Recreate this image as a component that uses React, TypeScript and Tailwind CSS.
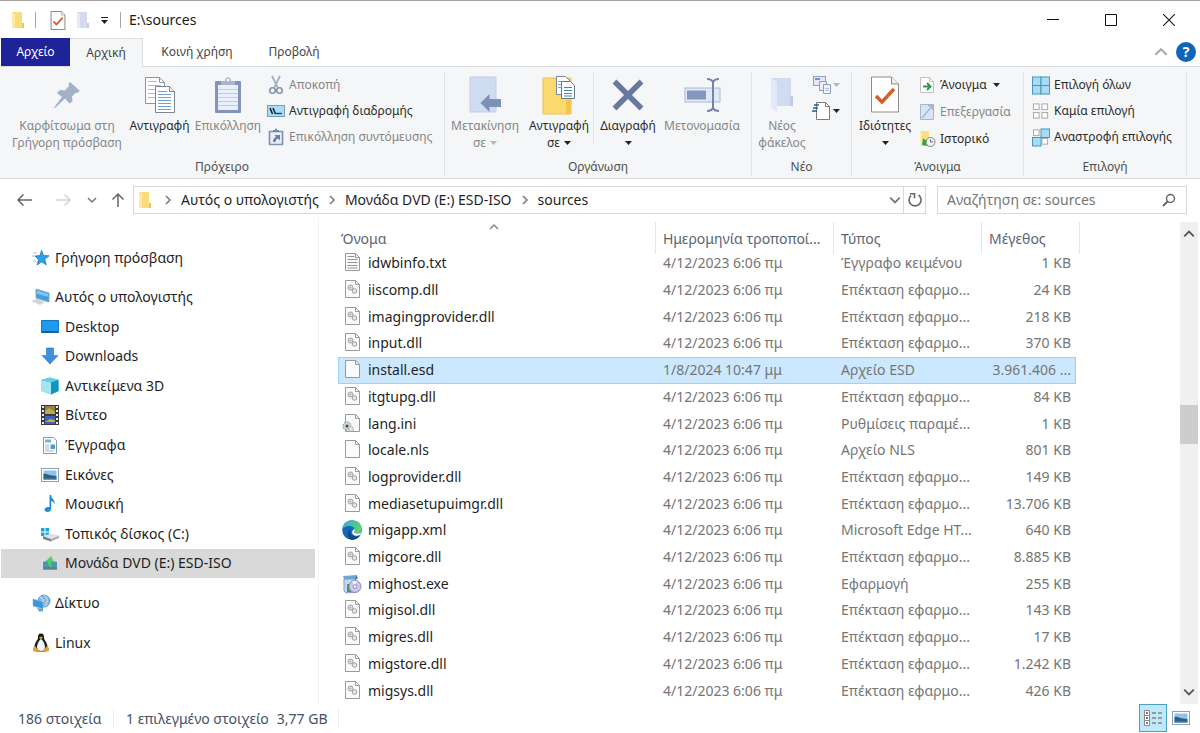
import React from "react";

type FileKind = "txt" | "dll" | "blank" | "ini" | "edge" | "exe";

interface FileRow {
  name: string;
  date: string;
  type: string;
  size: string;
  kind: FileKind;
  selected?: boolean;
}

const DATE = "4/12/2023 6:06 πμ";
const DLL = "Επέκταση εφαρμο...";

const files: FileRow[] = [
  { name: "idwbinfo.txt", date: DATE, type: "Έγγραφο κειμένου", size: "1 KB", kind: "txt" },
  { name: "iiscomp.dll", date: DATE, type: DLL, size: "24 KB", kind: "dll" },
  { name: "imagingprovider.dll", date: DATE, type: DLL, size: "218 KB", kind: "dll" },
  { name: "input.dll", date: DATE, type: DLL, size: "370 KB", kind: "dll" },
  { name: "install.esd", date: "1/8/2024 10:47 μμ", type: "Αρχείο ESD", size: "3.961.406 ...", kind: "blank", selected: true },
  { name: "itgtupg.dll", date: DATE, type: DLL, size: "84 KB", kind: "dll" },
  { name: "lang.ini", date: DATE, type: "Ρυθμίσεις παραμέ...", size: "1 KB", kind: "ini" },
  { name: "locale.nls", date: DATE, type: "Αρχείο NLS", size: "801 KB", kind: "blank" },
  { name: "logprovider.dll", date: DATE, type: DLL, size: "149 KB", kind: "dll" },
  { name: "mediasetupuimgr.dll", date: DATE, type: DLL, size: "13.706 KB", kind: "dll" },
  { name: "migapp.xml", date: DATE, type: "Microsoft Edge HT...", size: "640 KB", kind: "edge" },
  { name: "migcore.dll", date: DATE, type: DLL, size: "8.885 KB", kind: "dll" },
  { name: "mighost.exe", date: DATE, type: "Εφαρμογή", size: "255 KB", kind: "exe" },
  { name: "migisol.dll", date: DATE, type: DLL, size: "143 KB", kind: "dll" },
  { name: "migres.dll", date: DATE, type: DLL, size: "17 KB", kind: "dll" },
  { name: "migstore.dll", date: DATE, type: DLL, size: "1.242 KB", kind: "dll" },
  { name: "migsys.dll", date: DATE, type: DLL, size: "426 KB", kind: "dll" },
];

/* ---------- icons ---------- */

function FolderIcon({ pale = false }: { pale?: boolean }) {
  return (
    <svg width="14" height="18" viewBox="0 0 14 18">
      <path d="M1 1h10v11h2v5H1z" fill={pale ? "#d3dcee" : "#fbdc7c"} />
      <path d="M1 1l3 2v14l-3-1z" fill={pale ? "#e4eaf6" : "#fdeaaa"} />
      <path d="M11 12h2v5h-2z" fill={pale ? "#c2cee6" : "#f0c654"} />
    </svg>
  );
}

function CheckPageIcon({ big = false }: { big?: boolean }) {
  return (
    <svg width={big ? 30 : 16} height={big ? 37 : 19} viewBox="0 0 30 37">
      <path d="M1.500 1h20l7 7v28h-27z" fill="#fff" stroke="#8c8c8c" strokeWidth={big ? 1 : 2} />
      <path d="M21.500 1v7h7" fill="#eee" stroke="#8c8c8c" strokeWidth="1" />
      <path d="M6 20l6 6 12-13" fill="none" stroke="#d3602c" strokeWidth="3.500" />
    </svg>
  );
}

function Caret({ color = "#222" }: { color?: string }) {
  return (
    <svg width="7" height="4" viewBox="0 0 7 4" className="inline-block">
      <path d="M0 0h7L3.500 4z" fill={color} />
    </svg>
  );
}

function Chevron({ dir, color = "#555", size = 10 }: { dir: "up" | "down" | "right"; color?: string; size?: number }) {
  const paths = { up: "M1 7l4-4 4 4", down: "M1 3l4 4 4-4", right: "M3 1l4 4-4 4" };
  return (
    <svg width={size} height={size} viewBox="0 0 10 10">
      <path d={paths[dir]} fill="none" stroke={color} strokeWidth="1.500" />
    </svg>
  );
}

function PinIcon() {
  return (
    <svg width="28" height="28" viewBox="0 0 28 28">
      <path d="M17 1l10 9-3 2-1-.5-4 4 .5 5-3 2-4.500-5L2 27l-1-.5L9 16 4 12l3-3 5 .5 4-4.500-.5-2z" fill="#a3b0ca" />
    </svg>
  );
}

function CopyIcon() {
  return (
    <svg width="32" height="38" viewBox="0 0 32 38">
      <path d="M1.500 1.500h14l5 5v21h-19z" fill="#fff" stroke="#8a93a0" />
      <path d="M15.500 1.500v5h5" fill="none" stroke="#8a93a0" />
      <path d="M4 9.500h13M4 13.500h13M4 17.500h13M4 21.500h13M4 5.500h9" stroke="#a9bdd2" />
      <path d="M11.500 10.500h14l5 5v21h-19z" fill="#fff" stroke="#7b8593" />
      <path d="M25.500 10.500v5h5" fill="#eee" stroke="#7b8593" />
      <path d="M14 18.500h13M14 21.500h13M14 24.500h13M14 27.500h13M14 30.500h13M14 33.500h13M14 15.500h9" stroke="#6fa3cf" />
    </svg>
  );
}

function PasteIcon() {
  return (
    <svg width="28" height="38" viewBox="0 0 28 38">
      <rect x="1" y="5" width="26" height="32" rx="1" fill="#8494b8" />
      <path d="M4 9h20v25H4z" fill="#e9effb" />
      <path d="M4 13.500h20M4 17.500h20M4 21.500h20M4 25.500h20M4 29.500h20" stroke="#bccdec" />
      <path d="M7 9V5h4c0-5 6-5 6 0h4v4z" fill="#a8b4cf" />
      <circle cx="14" cy="4" r="1.500" fill="#f5f6f7" />
    </svg>
  );
}

function ScissorsIcon() {
  return (
    <svg width="16" height="20" viewBox="0 0 16 20">
      <path d="M4 1l6 12M12 1L6 13" stroke="#a3aec4" strokeWidth="1.800" />
      <circle cx="4.500" cy="15.500" r="2.800" fill="none" stroke="#8996b3" strokeWidth="1.600" />
      <circle cx="11.500" cy="15.500" r="2.800" fill="none" stroke="#8996b3" strokeWidth="1.600" />
    </svg>
  );
}

function PathIcon() {
  return (
    <svg width="18" height="12" viewBox="0 0 18 12">
      <rect x=".5" y=".5" width="17" height="11" fill="#a9dcf6" stroke="#7a9cb8" />
      <path d="M3 3l2.500 6M6 3l2.500 6" stroke="#1b2733" strokeWidth="1.600" />
      <path d="M9 8.500h6" stroke="#1b4a73" strokeWidth="1.400" />
    </svg>
  );
}

function PasteShortcutIcon() {
  return (
    <svg width="16" height="18" viewBox="0 0 16 18">
      <path d="M1.500 3.500h13v13h-13z" fill="#e9effa" stroke="#7f90b4" strokeWidth="1.600" />
      <path d="M5 4V2h2c0-2 2-2 2 0h2v2z" fill="#7385ab" />
      <path d="M5 14c0-3 1-4 3-5L6.500 7H12v5.500L10 10.500c-2 1-2 2-2.500 3.500z" fill="#6b7fa9" />
    </svg>
  );
}

function MoveToIcon() {
  return (
    <svg width="34" height="38" viewBox="0 0 34 38">
      <path d="M2 1h26v35H2z" fill="#d0dcf2" stroke="#bfcde8" />
      <path d="M12.500 27l9-9v5H33v8H21.500v5z" fill="#7f90b8" />
    </svg>
  );
}

function CopyToIcon() {
  return (
    <svg width="34" height="40" viewBox="0 0 34 40">
      <path d="M1 3h28v36H1z" fill="#fbd96c" stroke="#e9c257" />
      <path d="M24 25h5v14h-5z" fill="#f0c44e" />
      <path d="M14.500 1.500h9l4 4v14h-13z" fill="#fff" stroke="#7b8593" />
      <path d="M16 6.500h8M16 9.500h8M16 12.500h8" stroke="#7aa9d4" />
      <path d="M19.500 6.500h9l4 4v13h-13z" fill="#fff" stroke="#6a7889" />
      <path d="M22 12.500h8M22 15.500h8M22 18.500h8M22 21h8" stroke="#3f86c4" strokeWidth="1.200" />
    </svg>
  );
}

function DeleteIcon() {
  return (
    <svg width="32" height="32" viewBox="0 0 32 32">
      <path d="M2.500 2.500l27 27M29.500 2.500l-27 27" stroke="#68799f" strokeWidth="5.500" />
    </svg>
  );
}

function RenameIcon() {
  return (
    <svg width="37" height="36" viewBox="0 0 37 36">
      <rect x="1" y="11" width="35" height="14" fill="#dfe9f8" stroke="#a6b9da" />
      <rect x="3" y="13.500" width="19" height="9" fill="#8496bb" />
      <path d="M23 2c3 0 5 1 6 3 1-2 3-3 6-3M23 34c3 0 5-1 6-3 1 2 3 3 6 3M29 5v26" fill="none" stroke="#7484a6" strokeWidth="2" />
    </svg>
  );
}

function NewFolderIcon() {
  return (
    <svg width="26" height="38" viewBox="0 0 26 38">
      <path d="M2 2h20v18l2 2v8H2z" fill="#d0dbf1" />
      <path d="M2 2l6 4v31l-6-5z" fill="#e3eaf7" />
      <path d="M21 20h3v10h-3z" fill="#bfcce6" />
    </svg>
  );
}

function NewItemIcon() {
  return (
    <svg width="20" height="20" viewBox="0 0 20 20">
      <rect x="1.500" y="1.500" width="12" height="9" fill="#e2e9f5" stroke="#8f9fbe" />
      <path d="M3 4h5" stroke="#7e90b6" strokeWidth="2" />
      <path d="M7.500 6.500h7v9h-7z" fill="#e9eef7" stroke="#8f9fbe" />
      <path d="M11.500 9.500h7v9h-7z" fill="#f1f4fa" stroke="#8f9fbe" />
      <path d="M13 13.500h4M13 15.500h4" stroke="#b4c0d8" />
    </svg>
  );
}

function EasyAccessIcon() {
  return (
    <svg width="20" height="20" viewBox="0 0 20 20">
      <path d="M4.500 1.500h9l4 4v13h-13z" fill="#fff" stroke="#7d7d7d" />
      <path d="M13.500 1.500v4h4" fill="none" stroke="#7d7d7d" />
      <path d="M2 4h5M1 7h5M0 10h5" stroke="#2b5a80" strokeWidth="1.600" />
    </svg>
  );
}

function OpenIcon() {
  return (
    <svg width="16" height="18" viewBox="0 0 16 18">
      <path d="M1.500 1.500h9l4 4v11h-13z" fill="#fff" stroke="#c2c2c2" />
      <path d="M10.500 1.500v4h4" fill="none" stroke="#c2c2c2" />
      <path d="M4 10.500h6M8 7l3.500 3.500L8 14" fill="none" stroke="#2a9c45" strokeWidth="2" />
    </svg>
  );
}

function EditIcon() {
  return (
    <svg width="16" height="18" viewBox="0 0 16 18">
      <path d="M1.500 1.500h13v15h-13z" fill="#dbe4f4" stroke="#a6b5d3" />
      <path d="M3 15L13 3M9 2.500h4.500V7" fill="none" stroke="#a3b2d2" strokeWidth="1.300" />
    </svg>
  );
}

function HistoryIcon() {
  return (
    <svg width="17" height="18" viewBox="0 0 17 18">
      <path d="M1 1h9v15H1z" fill="#fbdf84" />
      <path d="M1 1l2 2v14l-2-1z" fill="#fdeeb6" />
      <circle cx="11.500" cy="12" r="4.500" fill="#f3f3f3" stroke="#858585" />
      <path d="M11.500 9.500V12h2.500" fill="none" stroke="#666" />
      <path d="M4 8l-1 7 6 1-2-2c0-2 0-3 1-4L6 10z" fill="#35a148" />
    </svg>
  );
}

function SelectGridIcon({ on }: { on: boolean[] }) {
  const spots = [[1, 1], [10, 1], [1, 10], [10, 10]];
  return (
    <svg width="19" height="19" viewBox="0 0 19 19">
      {spots.map(([x, y], i) => (
        <rect
          key={i}
          x={on[i] ? x - 0.5 : x + 0.5}
          y={on[i] ? y - 0.5 : y + 0.5}
          width={on[i] ? 9 : 6}
          height={on[i] ? 9 : 6}
          fill={on[i] ? "#a8dcf5" : "#fff"}
          stroke={on[i] ? "#4193bd" : "#a5a5a5"}
        />
      ))}
    </svg>
  );
}

function FileIcon({ kind }: { kind: FileKind }) {
  if (kind === "edge") {
    return (
      <svg width="20" height="20" viewBox="0 0 20 20">
        <defs>
          <linearGradient id="edgeTop" x1="0" y1="0" x2="1" y2=".4">
            <stop offset="0" stopColor="#2aa9e0" />
            <stop offset="1" stopColor="#5fd36a" />
          </linearGradient>
        </defs>
        <circle cx="10" cy="10" r="9.800" fill="#1469b8" />
        <path d="M.3 9C1 3.500 5 .2 10 .2c6 0 9.800 4 9.800 8.300 0 3-2.200 4.700-4.800 4.700-2 0-3-.7-2.500-1.700C13.500 9 11.500 6.500 8.500 6 5 5.500 1.500 7 .3 9z" fill="url(#edgeTop)" />
        <path d="M9.500 8c-3 2-2 7.500 3 8.300 2.500.4 4.500-.5 6-1.300-2 3.500-6 5.300-9.500 4.800C5 18 4.500 10.500 9.500 8z" fill="#114a8b" />
        <path d="M12.500 9c1 2-1.500 3 .5 4 2 .9 4.500.4 6-.8l-.5 2.500c-2.500 1.500-6 1.500-7.500-.2-1.500-1.500-1-4.500 1.500-5.500z" fill="#fff" />
      </svg>
    );
  }
  if (kind === "exe") {
    return (
      <svg width="20" height="20" viewBox="0 0 20 20">
        <path d="M1 2l14-1-1 4H2z" fill="#6fa6d6" />
        <path d="M2 5h12v13l-10 1-2-2z" fill="#c3d9ef" stroke="#7e9cc0" />
        <path d="M5 10h4v8H5z" fill="#3f9e55" />
        <path d="M14 1l2 3-3 2z" fill="#4c6f95" />
        <circle cx="13" cy="12.500" r="6" fill="#ccc5ec" stroke="#8c86bb" />
        <path d="M13 12.500L10 7.500a6 6 0 0 1 5-.5z" fill="#eef0ff" />
        <circle cx="13" cy="12.500" r="1.800" fill="#fff" stroke="#8c86bb" />
      </svg>
    );
  }
  return (
    <svg width="20" height="20" viewBox="0 0 20 20">
      <path d="M3.500.5h10l4 4v13h-14z" fill="#fbfbfb" stroke="#9a9a9a" />
      <path d="M13.500.5v4h4" fill="none" stroke="#9a9a9a" />
      {kind === "txt" && <path d="M5.500 3.500h7M5.500 6.500h10M5.500 9.500h10M5.500 12.500h10M5.500 15h10" stroke="#8f9499" />}
      {kind === "dll" && (
        <g fill="#e6e8ea" stroke="#989ea3">
          <circle cx="8.500" cy="7.500" r="2.500" />
          <circle cx="12.500" cy="11" r="2.300" />
          <circle cx="8.500" cy="7.500" r=".5" />
        </g>
      )}
      {kind === "ini" && (
        <g>
          <circle cx="5" cy="12" r="4" fill="#d2d8dc" stroke="#7f878d" strokeDasharray="2 1" />
          <circle cx="5" cy="12" r="1.500" fill="#3f474d" />
          <circle cx="9" cy="15" r="2.500" fill="#e3e6e8" stroke="#8b9197" strokeDasharray="1.500 1" />
        </g>
      )}
    </svg>
  );
}

function PictureIcon() {
  return (
    <svg width="18" height="14" viewBox="0 0 18 14">
      <rect x=".5" y=".5" width="17" height="13" fill="#fff" stroke="#8fa0b5" />
      <path d="M2.500 2.500h13v9h-13z" fill="#8cc4ee" />
      <path d="M2.500 6c3-1 5 2 13 2v3.500h-13z" fill="#2f5f7d" />
      <path d="M2.500 10.500h13v1h-13z" fill="#5b8fb8" />
    </svg>
  );
}

const navIcons: Record<string, React.ReactNode> = {
  star: (
    <svg width="18" height="18" viewBox="0 0 18 18">
      <path d="M9.500 1.500l2 5 5.500.3-4.300 3.500 1.600 5.500-4.800-3-4.500 3.200 1.500-5.500L3 7l5-.4z" fill="#2f9fe8" stroke="#1a78bd" strokeWidth=".8" />
      <path d="M1 4h4M0 7h3M1 12h3" stroke="#8ccbf3" />
    </svg>
  ),
  pc: (
    <svg width="20" height="18" viewBox="0 0 20 18">
      <path d="M5 1l13 4v9L5 10z" fill="#3e9fe4" stroke="#8fa9bd" />
      <path d="M6 2.500l11 3.300v3L6 6z" fill="#7cc5f5" />
      <path d="M0 13l6-2 8 3-5 3z" fill="#cfd6db" />
    </svg>
  ),
  desktop: (
    <svg width="18" height="14" viewBox="0 0 18 14">
      <path d="M.5.5h17v12H.5z" fill="#1e9bf0" stroke="#1577bb" />
      <path d="M1 11h16v2H1z" fill="#135f98" />
    </svg>
  ),
  down: (
    <svg width="18" height="18" viewBox="0 0 18 18">
      <path d="M5.500 1h7v7.500H17L9 17 1 8.500h4.500z" fill="#3d8fe0" stroke="#2b74bf" strokeWidth=".6" />
    </svg>
  ),
  cube: (
    <svg width="18" height="18" viewBox="0 0 18 18">
      <path d="M9 .5L17.500 3v11L10 17.500.5 14V3z" fill="#34b6d8" />
      <path d="M.5 3l9.500 2.500v12L.5 14z" fill="#a2e6f2" />
      <path d="M.5 3L9 .5 17.500 3 10 5.500z" fill="#62cfe4" />
      <path d="M10 5.500L17.500 3v11L10 17.500z" fill="#1495bd" />
    </svg>
  ),
  film: (
    <svg width="18" height="20" viewBox="0 0 18 20">
      <path d="M0 0h18v20H0z" fill="#3a3a3a" />
      <path d="M4 1h10v8H4z" fill="#8b8648" />
      <path d="M4 11h10v8H4z" fill="#3f63b8" />
      <path d="M4 6l4-3 6 4v2H4zM4 17l5-3 5 1v2z" fill="#c5a84b" />
      <path d="M2 1v18M16 1v18" stroke="#eee" strokeWidth="2" strokeDasharray="2 2" />
    </svg>
  ),
  docs: (
    <svg width="16" height="19" viewBox="0 0 16 19">
      <path d="M1.500 1.500h10l3 3v13h-13z" fill="#fff" stroke="#8b98a4" />
      <path d="M3 3.500h6v3H3z" fill="#6fb4dd" />
      <path d="M3 9h4M3 11h4M3 13h4M3 15h9" stroke="#9db8cb" />
      <path d="M8.500 8.500h4.500v4.500H8.500z" fill="#4b9ecb" />
    </svg>
  ),
  pictures: <PictureIcon />,
  music: (
    <svg width="18" height="18" viewBox="0 0 18 18">
      <path d="M8.500 0h1.700c0 4 4.300 4.500 3.300 9.500-.5-2.500-2-3-3.300-3.500v7.500c0 2-1.700 3.500-3.700 3.500S3.500 16 3.500 14.500s2-3 5-2.500z" fill="#1c8fd8" />
    </svg>
  ),
  disk: (
    <svg width="20" height="16" viewBox="0 0 20 16">
      <path d="M1 2h3.500v3.500H1zM5.500 2H9v3.500H5.500zM1 6.500h3.500V10H1zM5.500 6.500H9V10H5.500z" fill="#16a4d9" />
      <path d="M3 10l8-2.500 8 2-8 3.500z" fill="#e0e3e5" />
      <path d="M3 10l8 3v2.500l-8-2.500z" fill="#7d8487" />
      <path d="M11 13l8-3.500V12l-8 3.500z" fill="#a9afb2" />
    </svg>
  ),
  dvd: (
    <svg width="16" height="15" viewBox="0 0 16 15">
      <path d="M1 6l5-2 9 2v7.500H1z" fill="#4b97b0" />
      <path d="M1 11h14v2.500H1z" fill="#5b7f97" />
      <path d="M9 0L3 6h3c0 3 1 4 4 6-1-3-1-4-.5-6H12z" fill="#4fcf6b" />
    </svg>
  ),
  network: (
    <svg width="19" height="18" viewBox="0 0 19 18">
      <circle cx="12" cy="7" r="6" fill="#86b9db" stroke="#5e97c0" />
      <path d="M8 3c3 1 4 4 2 7M12 1c4 2 4 8 1 11" fill="none" stroke="#d4e9f6" />
      <path d="M1 5l10 3v7L1 12z" fill="#3397e2" stroke="#8fb2cb" strokeWidth=".6" />
      <path d="M5 14l6 1v2.500H7z" fill="#68a7d3" />
    </svg>
  ),
  linux: (
    <svg width="18" height="20" viewBox="0 0 18 20">
      <path d="M9 .5c2.500 0 3.200 2 3 4.500 0 2 3.500 4.500 3.500 9 0 2-1 4-3 4.500h-7c-2-.5-3-2.500-3-4.500C2.500 9.500 6 7 6 5 5.800 2.500 6.500.5 9 .5z" fill="#1c1c1c" />
      <path d="M9 6c1.800 1 4 5 4 8 0 2.500-2 4-4 4s-4-1.500-4-4c0-3 2.200-7 4-8z" fill="#f5f5f5" />
      <path d="M7 4.500l2-1 2 1-2 1.800z" fill="#e8a92d" />
      <path d="M3 13l4 4.500-1 2-5-1.500v-3zM15 13l-4 4.500 1 2 5-1.500v-3z" fill="#d9a53a" />
    </svg>
  ),
};

/* ---------- ribbon ---------- */

function BigButton({
  icon,
  lines,
  caret,
  disabled,
  width,
}: {
  icon: React.ReactNode;
  lines: string[];
  caret?: boolean;
  disabled?: boolean;
  width: string;
}) {
  return (
    <button
      className={`flex shrink-0 flex-col items-center text-xs leading-[17px] whitespace-nowrap ${width} ${
        disabled ? "text-[#868686]" : "text-[#2b2b2b]"
      }`}
    >
      <span className="flex h-[45px] items-center justify-center">{icon}</span>
      {lines.map((line, i) => (
        <span key={i} className="flex h-[17px] items-center gap-1">
          {line}
          {caret && i === lines.length - 1 && <Caret color={disabled ? "#b5b5b5" : "#222"} />}
        </span>
      ))}
    </button>
  );
}

function SmallButton({
  icon,
  label,
  caret,
  disabled,
}: {
  icon: React.ReactNode;
  label: string;
  caret?: boolean;
  disabled?: boolean;
}) {
  return (
    <button
      className={`flex h-[26px] items-center gap-1 text-xs whitespace-nowrap ${
        disabled ? "text-[#868686]" : "text-[#2b2b2b]"
      }`}
    >
      <span className="flex w-[18px] justify-center">{icon}</span>
      {label}
      {caret && (
        <span className="flex pl-0.5">
          <Caret />
        </span>
      )}
    </button>
  );
}

function RibbonGroup({ title, width, children }: { title: string; width: string; children: React.ReactNode }) {
  return (
    <section className={`flex shrink-0 flex-col justify-between border-r border-[#e2e3e4] ${width}`}>
      <div className="flex">{children}</div>
      <h2 className="text-center text-xs leading-[18px] text-[#4f4f4f]">{title}</h2>
    </section>
  );
}

function Ribbon() {
  return (
    <div className="flex h-28 border-b border-[#dadbdc] bg-[#f5f6f7] pt-[5px] pb-0.5 text-[#2b2b2b]">
      <RibbonGroup title="Πρόχειρο" width="w-[445px]">
        <BigButton icon={<PinIcon />} lines={["Καρφίτσωμα στη", "Γρήγορη πρόσβαση"]} disabled width="w-[126px] pl-2" />
        <BigButton icon={<CopyIcon />} lines={["Αντιγραφή"]} width="w-[67px]" />
        <BigButton icon={<PasteIcon />} lines={["Επικόλληση"]} disabled width="w-[70px]" />
        <div className="flex flex-col pl-1">
          <SmallButton icon={<ScissorsIcon />} label="Αποκοπή" disabled />
          <SmallButton icon={<PathIcon />} label="Αντιγραφή διαδρομής" />
          <SmallButton icon={<PasteShortcutIcon />} label="Επικόλληση συντόμευσης" disabled />
        </div>
      </RibbonGroup>
      <RibbonGroup title="Οργάνωση" width="w-[307px]">
        <BigButton icon={<MoveToIcon />} lines={["Μετακίνηση", "σε"]} caret disabled width="w-20" />
        <BigButton icon={<CopyToIcon />} lines={["Αντιγραφή", "σε"]} caret width="w-[68px]" />
        <div className="h-[72px] border-l border-[#e2e3e4]" />
        <BigButton icon={<DeleteIcon />} lines={["Διαγραφή", ""]} caret width="w-[68px]" />
        <BigButton icon={<RenameIcon />} lines={["Μετονομασία"]} disabled width="w-20" />
      </RibbonGroup>
      <RibbonGroup title="Νέο" width="w-[100px]">
        <BigButton icon={<NewFolderIcon />} lines={["Νέος", "φάκελος"]} disabled width="w-[60px]" />
        <div className="flex flex-col">
          <button aria-label="Νέο στοιχείο" className="flex h-[26px] items-center gap-px">
            <NewItemIcon />
            <Caret color="#b5b5b5" />
          </button>
          <button aria-label="Εύκολη πρόσβαση" className="flex h-[26px] items-center gap-px">
            <EasyAccessIcon />
            <Caret />
          </button>
        </div>
      </RibbonGroup>
      <RibbonGroup title="Άνοιγμα" width="w-[172px]">
        <BigButton icon={<CheckPageIcon big />} lines={["Ιδιότητες", ""]} caret width="w-[66px]" />
        <div className="flex flex-col gap-px">
          <SmallButton icon={<OpenIcon />} label="Άνοιγμα" caret />
          <SmallButton icon={<EditIcon />} label="Επεξεργασία" disabled />
          <SmallButton icon={<HistoryIcon />} label="Ιστορικό" />
        </div>
      </RibbonGroup>
      <RibbonGroup title="Επιλογή" width="w-[163px]">
        <div className="flex flex-col pl-2">
          <SmallButton icon={<SelectGridIcon on={[true, true, true, true]} />} label="Επιλογή όλων" />
          <SmallButton icon={<SelectGridIcon on={[false, false, false, false]} />} label="Καμία επιλογή" />
          <SmallButton icon={<SelectGridIcon on={[false, true, true, false]} />} label="Αναστροφή επιλογής" />
        </div>
      </RibbonGroup>
    </div>
  );
}

/* ---------- window parts ---------- */

function TitleBar() {
  return (
    <header className="flex h-[38px] shrink-0 items-center border-t border-[#a8a4a2] pt-px pl-[11px]">
      <FolderIcon />
      <span className="ml-2.5 h-4 border-l border-[#a5a5a5]" />
      <button aria-label="Ιδιότητες" className="ml-3.5">
        <CheckPageIcon />
      </button>
      <button aria-label="Νέος φάκελος" className="ml-2.5">
        <FolderIcon pale />
      </button>
      <button aria-label="Προσαρμογή" className="ml-[11px] flex flex-col items-center gap-0.5">
        <span className="w-[7px] border-t border-[#222]" />
        <Caret />
      </button>
      <span className="ml-3 h-4 border-l border-[#a5a5a5]" />
      <h1 className="ml-2 text-sm text-[#1a1a1a]">E:\sources</h1>
      <div className="ml-auto flex pr-[2px]">
        <button aria-label="Ελαχιστοποίηση" className="flex h-8 w-[58px] items-center justify-center">
          <svg width="12" height="12" viewBox="0 0 12 12">
            <path d="M0 5.500h12" stroke="#111" />
          </svg>
        </button>
        <button aria-label="Μεγιστοποίηση" className="flex h-8 w-[58px] items-center justify-center">
          <svg width="12" height="12" viewBox="0 0 12 12">
            <path d="M.5.5h11v11H.5z" fill="none" stroke="#111" />
          </svg>
        </button>
        <button aria-label="Κλείσιμο" className="flex h-8 w-[58px] items-center justify-center">
          <svg width="12" height="12" viewBox="0 0 12 12">
            <path d="M0 0l12 12M12 0L0 12" stroke="#222" strokeWidth="1.200" />
          </svg>
        </button>
      </div>
    </header>
  );
}

function Tabs() {
  return (
    <nav className="flex h-[29px] shrink-0 items-stretch border-b border-[#dadbdc] text-xs text-[#444]">
      <button className="ml-px w-[69px] bg-[#1e2497] text-white">Αρχείο</button>
      <button className="-mb-px w-[73px] border-t border-r border-[#dadbdc] bg-[#f5f6f7]">Αρχική</button>
      <button className="w-[108px]">Κοινή χρήση</button>
      <button className="w-[86px]">Προβολή</button>
      <div className="ml-auto flex items-center gap-2 pr-1">
        <button aria-label="Σύμπτυξη κορδέλας">
          <Chevron dir="up" color="#aaa" size={14} />
        </button>
        <button className="flex size-5 items-center justify-center rounded-full bg-[#0f66b8] text-sm font-bold text-white">
          ?
        </button>
      </div>
    </nav>
  );
}

function AddressBar() {
  return (
    <div className="flex h-[38px] shrink-0 items-center pt-1 pr-[13px]">
      <div className="flex w-[133px] items-center pl-4">
        <button aria-label="Πίσω">
          <svg width="18" height="14" viewBox="0 0 18 14">
            <path d="M16 7H2M7.500 1.500L2 7l5.500 5.500" fill="none" stroke="#666" strokeWidth="1.500" />
          </svg>
        </button>
        <button aria-label="Εμπρός" className="ml-5">
          <svg width="18" height="14" viewBox="0 0 18 14">
            <path d="M2 7h14M10.500 1.500L16 7l-5.500 5.500" fill="none" stroke="#d2d2d2" strokeWidth="1.500" />
          </svg>
        </button>
        <button aria-label="Πρόσφατα" className="ml-[15px]">
          <Chevron dir="down" color="#777" />
        </button>
        <button aria-label="Επάνω" className="ml-3.5">
          <svg width="14" height="16" viewBox="0 0 14 16">
            <path d="M7 15V2M1.500 7.500L7 2l5.500 5.500" fill="none" stroke="#666" strokeWidth="1.500" />
          </svg>
        </button>
      </div>
      <div className="flex h-7 flex-1 items-center border border-[#d9d9d9] pl-1 text-sm text-[#1f1f1f]">
        <FolderIcon />
        <ol className="flex flex-1 items-center pl-[11px]">
          {["Αυτός ο υπολογιστής", "Μονάδα DVD (E:) ESD-ISO", "sources"].map((part) => (
            <li key={part} className="flex items-center gap-2 pr-2">
              <Chevron dir="right" color="#777" />
              <a href="#">{part}</a>
            </li>
          ))}
        </ol>
        <button aria-label="Προηγούμενες θέσεις" className="pr-0.5">
          <Chevron dir="down" color="#777" size={12} />
        </button>
        <button aria-label="Ανανέωση" className="flex h-full w-[22px] items-center justify-center border-l border-[#d9d9d9]">
          <svg width="16" height="16" viewBox="0 0 16 16">
            <path d="M11.500 3A6 6 0 1 1 4 3.500" fill="none" stroke="#666" strokeWidth="1.600" />
            <path d="M3 1.800h4.500v4.500" fill="none" stroke="#666" strokeWidth="1.600" />
          </svg>
        </button>
      </div>
      <label className="ml-[11px] flex h-7 w-[250px] items-center border border-[#d9d9d9] pr-2.5 pl-[9px]">
        <input
          type="search"
          aria-label="Αναζήτηση"
          placeholder="Αναζήτηση σε: sources"
          className="min-w-0 flex-1 text-sm outline-none placeholder:text-[#757575]"
        />
        <svg width="14" height="14" viewBox="0 0 14 14">
          <circle cx="8.500" cy="5.500" r="4" fill="none" stroke="#666" strokeWidth="1.500" />
          <path d="M5.500 8.500L1 13" stroke="#666" strokeWidth="2" />
        </svg>
      </label>
    </div>
  );
}

const pcChildren = [
  { icon: "desktop", label: "Desktop" },
  { icon: "down", label: "Downloads" },
  { icon: "cube", label: "Αντικείμενα 3D" },
  { icon: "film", label: "Βίντεο" },
  { icon: "docs", label: "Έγγραφα" },
  { icon: "pictures", label: "Εικόνες" },
  { icon: "music", label: "Μουσική" },
  { icon: "disk", label: "Τοπικός δίσκος (C:)" },
  { icon: "dvd", label: "Μονάδα DVD (E:) ESD-ISO", active: true },
];

function NavRoot({ icon, label }: { icon: string; label: string }) {
  return (
    <a href="#" className="flex h-[30px] items-center gap-1 pl-[30px]">
      <span className="flex w-5 justify-center">{navIcons[icon]}</span>
      {label}
    </a>
  );
}

function Sidebar() {
  return (
    <aside className="w-[319px] shrink-0 border-r border-[#f3f3f3] pt-[26px] pr-[3px] pl-px text-sm text-[#1f1f1f]">
      <NavRoot icon="star" label="Γρήγορη πρόσβαση" />
      <div className="pt-[9px]">
        <NavRoot icon="pc" label="Αυτός ο υπολογιστής" />
        <ul className="flex h-[266px] flex-col">
          {pcChildren.map((item) => (
            <li key={item.label} className="flex-1">
              <a href="#" className={`flex h-full items-center gap-[5px] pl-[38px] ${item.active ? "bg-[#d9d9d9]" : ""}`}>
                <span className="flex w-[21px] justify-center">{navIcons[item.icon]}</span>
                {item.label}
              </a>
            </li>
          ))}
        </ul>
      </div>
      <div className="flex flex-col gap-2.5 pt-2.5">
        <NavRoot icon="network" label="Δίκτυο" />
        <NavRoot icon="linux" label="Linux" />
      </div>
    </aside>
  );
}

function FileTable() {
  const th =
    "relative p-0 text-left align-middle font-normal after:absolute after:top-0 after:h-8 after:border-r after:border-[#e5e5e5]";
  return (
    <table className="h-full w-[738px] table-fixed border-collapse text-sm leading-5 whitespace-nowrap">
      <colgroup>
        <col />
        <col className="w-[178px]" />
        <col className="w-[148px]" />
        <col className="w-[94px]" />
      </colgroup>
      <thead className="text-[#5a6473]">
        <tr className="h-7">
          <th className={`${th} after:right-0`}>
            <span className="block pt-1.5 pl-[3px]">Όνομα</span>
            <span className="absolute top-0 left-[151px]">
              <Chevron dir="up" color="#888" />
            </span>
          </th>
          <th className={`${th} after:right-0`}>
            <span className="block pt-1.5 pl-[7px]">Ημερομηνία τροποποί...</span>
          </th>
          <th className={`${th} after:right-0`}>
            <span className="block pt-1.5 pl-[7px]">Τύπος</span>
          </th>
          <th className={`${th} after:-right-1`}>
            <span className="block pt-1.5 pl-[7px]">Μέγεθος</span>
          </th>
        </tr>
      </thead>
      <tbody className="text-[#757575]">
        {files.map((file) => (
          <tr key={file.name} className={file.selected ? "bg-[#cce8ff] outline -outline-offset-1 outline-[#99d1ff]" : ""}>
            <td className="p-0 pl-1 text-[#1f1f1f]">
              <span className="flex items-center gap-1.5">
                <FileIcon kind={file.kind} />
                {file.name}
              </span>
            </td>
            <td className="p-0 pl-[7px]">{file.date}</td>
            <td className="p-0 pl-[7px]">{file.type}</td>
            <td className="p-0 pr-[5px] text-right">{file.size}</td>
          </tr>
        ))}
      </tbody>
    </table>
  );
}

function ScrollBar() {
  return (
    <div className="mr-0.5 ml-auto flex w-[18px] flex-col items-center bg-[#f0f0f0]">
      <button aria-label="Κύλιση επάνω" className="flex h-6 items-center">
        <Chevron dir="up" size={12} />
      </button>
      <div className="flex w-full flex-1 flex-col">
        <div className="grow-[159]" />
        <div className="h-[39px] bg-[#cdcdcd]" />
        <div className="grow-[236]" />
      </div>
      <button aria-label="Κύλιση κάτω" className="flex h-6 items-center">
        <Chevron dir="down" size={12} />
      </button>
    </div>
  );
}

function StatusBar() {
  return (
    <footer className="flex h-[29px] shrink-0 items-center pr-2.5 pl-[18px] text-sm text-[#44506a]">
      <span className="w-24 border-r border-[#ececec]">186 στοιχεία</span>
      <span className="pl-3">1 επιλεγμένο στοιχείο</span>
      <span className="border-r border-[#ececec] pr-2.5 pl-2">3,77 GB</span>
      <div className="ml-auto flex items-center gap-[5px] self-start">
        <button aria-label="Λεπτομέρειες" className="flex size-7 items-center justify-center border border-[#4aa0c0] bg-[#bfe9f8]">
          <svg width="20" height="16" viewBox="0 0 20 16">
            <path d="M1.500.5h5v15h-5zM1.500 5.500h5M1.500 10.500h5" fill="#fff" stroke="#8a8a8a" />
            <path d="M3 3h2M3 8h2M3 13h2" stroke="#7d3d3d" strokeWidth="1.500" />
            <path d="M9 3h4M15 3h4M9 8h4M15 8h4M9 13h4M15 13h4" stroke="#555" />
          </svg>
        </button>
        <button aria-label="Μεγάλα εικονίδια">
          <PictureIcon />
        </button>
      </div>
    </footer>
  );
}

export default function App() {
  return (
    <div className="flex h-screen flex-col overflow-hidden bg-white font-['Noto_Sans','Open_Sans',sans-serif]">
      <TitleBar />
      <Tabs />
      <div className="shrink-0">
        <Ribbon />
      </div>
      <AddressBar />
      <main className="flex min-h-0 flex-1">
        <Sidebar />
        <div className="flex min-w-0 flex-1 pt-[5px] pl-[19px]">
          <FileTable />
          <ScrollBar />
        </div>
      </main>
      <StatusBar />
    </div>
  );
}
